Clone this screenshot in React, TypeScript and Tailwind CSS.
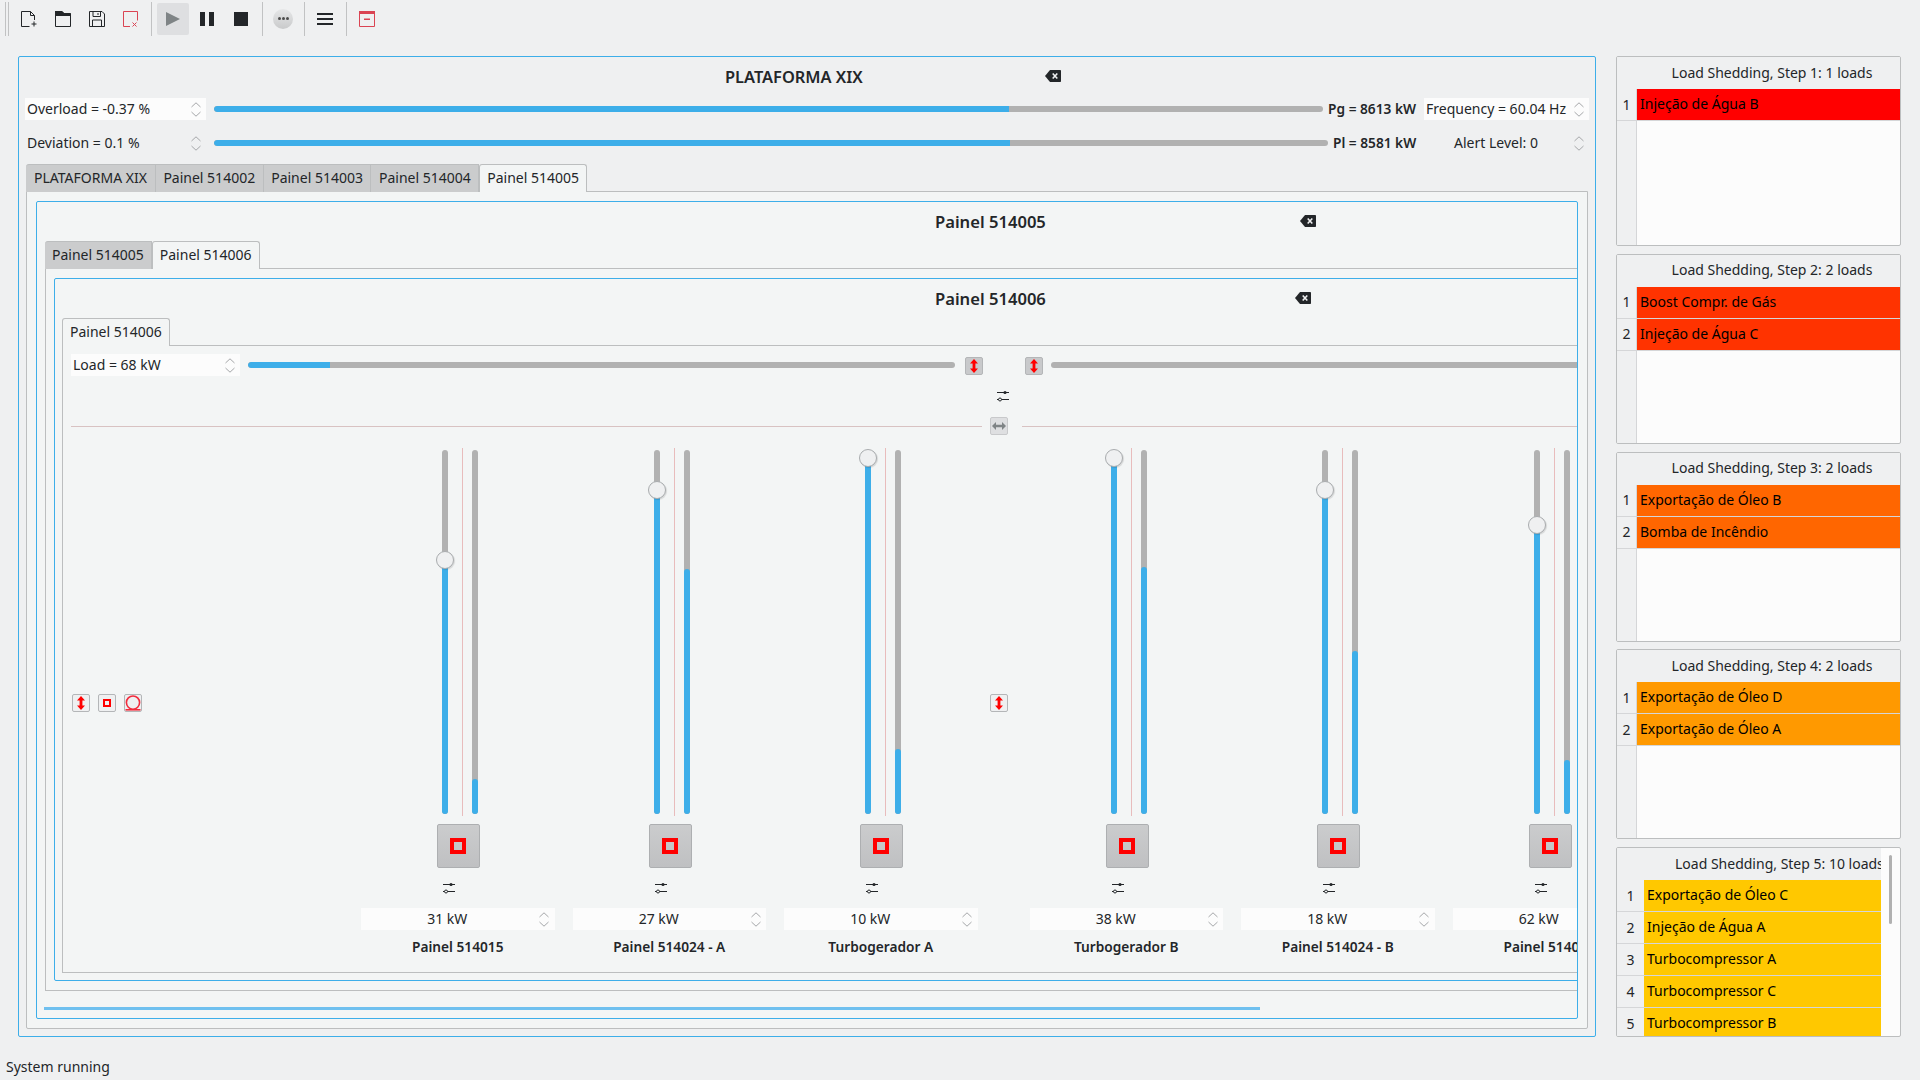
import type { ReactNode } from "react";

function Chevrons() {
  return (
    <svg width="10" height="15" viewBox="0 0 10 15" fill="none" stroke="#a5a7a9" strokeWidth="1">
      <path d="M0.5 5L5 0.8L9.5 5" />
      <path d="M0.5 10L5 14.2L9.5 10" />
    </svg>
  );
}

function Spin({ text, className, white = true, center = false }: { text: string; className: string; white?: boolean; center?: boolean }) {
  return (
    <div className={`flex h-[22px] shrink-0 items-center ${white ? "bg-[#fcfcfc]" : ""} ${className}`}>
      <div className={`min-w-0 flex-1 whitespace-nowrap pb-px ${center ? "text-center" : "pl-[2px]"}`}>{text}</div>
      <div className="flex w-[21px] shrink-0 justify-center">
        <Chevrons />
      </div>
    </div>
  );
}

function HSlider({ className, fill }: { className: string; fill: number }) {
  return (
    <div className={`h-[6px] shrink-0 overflow-hidden rounded-full bg-[#b1b1b1] ${className}`}>
      <div className="h-full rounded-l-full bg-[#3daee9]" style={{ width: `${fill}px` }} />
    </div>
  );
}

function VSlider({ handle, fillFrom }: { handle?: number; fillFrom: number }) {
  return (
    <div className="relative mt-[2px] h-[364px] w-[6px] shrink-0">
      <div className="h-full w-full overflow-hidden rounded-full bg-[#b1b1b1]">
        <div className="w-full rounded-t-[3px] bg-[#3daee9]" style={{ marginTop: `${fillFrom}px`, height: `${364 - fillFrom}px` }} />
      </div>
      {handle !== undefined && (
        <div
          className="absolute left-[-6px] h-[18px] w-[18px] rounded-full border border-[#a9acae] bg-[#eff0f1] shadow-[1px_1px_1px_rgba(0,0,0,0.12)]"
          style={{ top: `${handle - 9}px` }}
        />
      )}
    </div>
  );
}

function Backspace({ className = "" }: { className?: string }) {
  return (
    <svg className={`shrink-0 ${className}`} width="16" height="12" viewBox="0 0 16 12">
      <path d="M5 0H15.2Q16 0 16 .8V11.2Q16 12 15.2 12H5L0 6Z" fill="#232629" />
      <path d="M7.7 3.5L12.3 8.5M12.3 3.5L7.7 8.5" stroke="#eff0f1" strokeWidth="1.6" />
    </svg>
  );
}

function SlidersIcon({ className = "" }: { className?: string }) {
  return (
    <svg className={`block ${className}`} width="12" height="12" viewBox="0 0 12 12" fill="none">
      <path d="M0 2.5H12M0 9.5H1.5M4.5 9.5H12" stroke="#232629" strokeWidth="1" />
      <circle cx="8" cy="2.5" r="1.6" fill="#232629" />
      <circle cx="3" cy="9.5" r="1.5" stroke="#232629" strokeWidth="1" fill="none" />
    </svg>
  );
}

function RedArrows() {
  return (
    <svg width="8" height="14" viewBox="0 0 8 14" fill="#ff0000">
      <path d="M4 0L8 4.5H5.4V9.5H8L4 14L0 9.5H2.6V4.5H0Z" />
    </svg>
  );
}

function SmallButton({ children, className = "" }: { children: ReactNode; className?: string }) {
  return (
    <div className={`flex h-[18px] w-[18px] shrink-0 items-center justify-center rounded-[2px] border border-[#b4b6b8] ${className}`}>
      {children}
    </div>
  );
}

function Tab({ label, active = false, first = false, wide = false }: { label: string; active?: boolean; first?: boolean; wide?: boolean }) {
  const pad = wide ? "px-[8px]" : first || active ? "px-[7px]" : "px-[7.5px]";
  return (
    <div
      className={`flex h-[28px] items-center whitespace-nowrap border border-[#bcbebf] pb-px ${pad} ${
        active ? "z-10 -mb-px rounded-t-[3px] border-b-0 bg-[#f3f5f5]" : "h-[27px] border-b-0 border-l-0 bg-[#cbcccd]"
      } ${first ? "rounded-tl-[3px] border-l" : ""}`}
    >
      {label}
    </div>
  );
}

type Column = { name: string; kw: string; handle: number; fillFrom: number };

const leftColumns: Column[] = [
  { name: "Painel 514015", kw: "31 kW", handle: 110, fillFrom: 329 },
  { name: "Painel 514024 - A", kw: "27 kW", handle: 40, fillFrom: 119 },
  { name: "Turbogerador A", kw: "10 kW", handle: 8, fillFrom: 299 },
];

const rightColumns: Column[] = [
  { name: "Turbogerador B", kw: "38 kW", handle: 8, fillFrom: 117 },
  { name: "Painel 514024 - B", kw: "18 kW", handle: 40, fillFrom: 201 },
  { name: "Painel 514025", kw: "62 kW", handle: 75, fillFrom: 310 },
];

function PanelColumn({ col }: { col: Column }) {
  return (
    <div className="flex h-[510px] w-[193.5px] shrink-0 flex-col">
      <div className="flex h-[368px] pl-[81px]">
        <VSlider handle={col.handle} fillFrom={col.handle} />
        <div className="ml-[14px] h-full w-px bg-[#e8bcbc]" />
        <div className="ml-[9px]">
          <VSlider fillFrom={col.fillFrom} />
        </div>
      </div>
      <div className="ml-[76px] mt-[8px] flex h-[44px] w-[43px] items-center justify-center rounded-[2px] border border-[#adafb1] bg-gradient-to-b from-[#cbcccd] to-[#bfc0c2] pr-px">
        <div className="h-[16px] w-[16px] border-[4px] border-[#ff0000]" />
      </div>
      <SlidersIcon className="ml-[82px] mt-[14px]" />
      <Spin text={col.kw} className="mt-[14px] w-full" center />
      <div className="mt-[6px] flex h-[22px] items-center justify-center whitespace-nowrap pb-px text-[13.7px] font-semibold">{col.name}</div>
    </div>
  );
}

type Shed = { title: string; color: string; loads: string[] };

const sheds: Shed[] = [
  { title: "Load Shedding, Step 1: 1 loads", color: "#ff0000", loads: ["Injeção de Água B"] },
  { title: "Load Shedding, Step 2: 2 loads", color: "#ff3300", loads: ["Boost Compr. de Gás", "Injeção de Água C"] },
  { title: "Load Shedding, Step 3: 2 loads", color: "#ff6600", loads: ["Exportação de Óleo B", "Bomba de Incêndio"] },
  { title: "Load Shedding, Step 4: 2 loads", color: "#ff9900", loads: ["Exportação de Óleo D", "Exportação de Óleo A"] },
];

const step5 = ["Exportação de Óleo C", "Injeção de Água A", "Turbocompressor A", "Turbocompressor C", "Turbocompressor B"];

function ShedPanel({ shed }: { shed: Shed }) {
  return (
    <div className="h-[190px] overflow-hidden rounded-[2px] border border-[#bcbebf] bg-[#fcfcfc]">
      <div className="flex h-[32px] items-center justify-center bg-[#eff0f1] pb-[1px] pl-[27px] whitespace-nowrap">{shed.title}</div>
      <div className="flex h-[156px]">
        <div className="w-[20px] shrink-0 border-r border-[#d5d6d8] bg-[#eff0f1]">
          {shed.loads.map((_, i) => (
            <div key={i} className="flex h-[32px] items-center justify-center border-b border-[#d5d6d8]">
              {i + 1}
            </div>
          ))}
        </div>
        <div className="flex-1">
          {shed.loads.map((load) => (
            <div
              key={load}
              className="flex h-[32px] items-center border-b border-[#d5d6d8] pb-[1px] pl-[3px] text-black"
              style={{ backgroundColor: shed.color }}
            >
              {load}
            </div>
          ))}
        </div>
      </div>
    </div>
  );
}

function Step5Panel() {
  return (
    <div className="flex h-[190px] overflow-hidden rounded-[2px] border border-[#bcbebf] bg-[#fcfcfc]">
      <div className="w-[264px] shrink-0 bg-[#eff0f1]">
        <div className="flex h-[32px] items-center overflow-hidden whitespace-nowrap pb-[1px] pl-[58px]">Load Shedding, Step 5: 10 loads</div>
        {step5.map((load, i) => (
          <div key={load} className="flex h-[32px] border-b border-[#d5d6d8]">
            <div className="flex w-[27px] shrink-0 items-center justify-center">{i + 1}</div>
            <div className="flex flex-1 items-center bg-[#ffc800] pb-[1px] pl-[3px] text-black">{load}</div>
          </div>
        ))}
      </div>
      <div className="flex-1 pl-[8px] pt-[7px]">
        <div className="h-[69px] w-[3px] rounded-full bg-[#b1b1b1]" />
      </div>
    </div>
  );
}

function Toolbar() {
  const sep = "h-[34px] w-px shrink-0 bg-[#c1c2c3]";
  return (
    <div className="flex h-[37px] items-center pl-[5px]">
      <div className={sep} />
      <div className={`${sep} ml-[2px]`} />
      <svg className="ml-[12px]" width="16" height="16" viewBox="0 0 16 16" fill="none" stroke="#232629" strokeWidth="1">
        <path d="M8.5 15.5H.5V.5H9.5L13.5 4.5V9" />
        <path d="M9.5 .5V4.5H13.5" />
        <path d="M13 10.5V15.5M10.5 13H15.5" />
      </svg>
      <svg className="ml-[18px]" width="16" height="16" viewBox="0 0 16 16" fill="none">
        <path d="M.5 15.5V.5H7L9 2.5H15.5V15.5Z" stroke="#232629" />
        <path d="M0 0H7L9.5 2.5H16V5H0Z" fill="#232629" />
      </svg>
      <svg className="ml-[18px]" width="16" height="16" viewBox="0 0 16 16" fill="none" stroke="#232629">
        <path d="M.5 .5H13L15.5 3V15.5H.5Z" />
        <path d="M4 .5V5.5H11.5V.5M9 2V4M3.5 15.5V9H12.5V15.5" />
      </svg>
      <svg className="ml-[18px]" width="16" height="16" viewBox="0 0 16 16" fill="none" stroke="#da4453">
        <path d="M7 15.5H.5V.5H14.5V9.5" />
        <path d="M9.5 11.5L13.5 15.5M13.5 11.5L9.5 15.5" />
      </svg>
      <div className={`${sep} ml-[12px]`} />
      <div className="ml-[5px] flex h-[32px] w-[32px] items-center justify-center rounded-[2px] bg-[#dedfe1]">
        <svg width="14" height="14" viewBox="0 0 14 14">
          <path d="M0 0L14 7L0 14Z" fill="#7f8486" />
        </svg>
      </div>
      <svg className="ml-[11px]" width="14" height="14" viewBox="0 0 14 14" fill="#232629">
        <path d="M0 0H5V14H0ZM9 0H14V14H9Z" />
      </svg>
      <svg className="ml-[20px]" width="14" height="14" viewBox="0 0 14 14" fill="#232629">
        <path d="M0 0H14V14H0Z" />
      </svg>
      <div className={`${sep} ml-[14px]`} />
      <div className="ml-[10px] flex h-[20px] w-[20px] items-center justify-center gap-[1px] rounded-full bg-gradient-to-b from-[#e6e7e8] to-[#c9cacb]">
        <div className="h-[3px] w-[3px] rounded-full bg-[#4d4d4d]" />
        <div className="h-[3px] w-[3px] rounded-full bg-[#4d4d4d]" />
        <div className="h-[3px] w-[3px] rounded-full bg-[#4d4d4d]" />
      </div>
      <div className={`${sep} ml-[11px]`} />
      <div className="ml-[12px] flex w-[16px] flex-col gap-[3px]">
        <div className="h-[2px] bg-[#232629]" />
        <div className="h-[2px] bg-[#232629]" />
        <div className="h-[2px] bg-[#232629]" />
      </div>
      <div className={`${sep} ml-[13px]`} />
      <svg className="ml-[12px]" width="16" height="16" viewBox="0 0 16 16" fill="none">
        <path d="M.5 .5H15.5V15.5H.5Z" stroke="#da4453" />
        <path d="M0 0H16V3H0ZM5 7.5H11V9H5Z" fill="#da4453" />
      </svg>
    </div>
  );
}

export default function App() {
  return (
    <div className="h-[1080px] w-[1920px] overflow-hidden bg-[#eff0f1] font-['Noto_Sans',sans-serif] text-[14px] leading-[18px] text-[#232629]">
      <Toolbar />
      <div className="ml-[18px] mt-[19px] flex gap-[20px]">
        {/* plataforma */}
        <div className="h-[981px] w-[1578px] rounded-[2px] border border-[#3daee9]">
          <div className="flex h-[41px] items-center pb-[3px]">
            <div className="ml-[706px] mt-[2px] w-[138px] whitespace-nowrap text-[16.4px] font-semibold">PLATAFORMA XIX</div>
            <Backspace className="ml-[182px]" />
          </div>
          <div className="flex items-center pl-[6px]">
            <Spin text="Overload = -0.37 %" className="w-[181px]" />
            <HSlider className="ml-[8px] w-[1109px]" fill={795} />
            <div className="ml-[5px] w-[88px] whitespace-nowrap pb-px text-right text-[13.7px] font-semibold">Pg = 8613 kW</div>
            <Spin text="Frequency = 60.04 Hz" className="ml-[8px] w-[165px]" />
          </div>
          <div className="mt-[12px] flex items-center pl-[6px]">
            <Spin text="Deviation = 0.1 %" className="w-[181px]" white={false} />
            <HSlider className="ml-[8px] w-[1114px]" fill={796} />
            <div className="ml-[5px] w-[83px] whitespace-nowrap pb-px text-right text-[13.7px] font-semibold">Pl = 8581 kW</div>
            <Spin text="Alert Level: 0" className="ml-[8px] w-[165px]" white={false} center />
          </div>
          <div className="ml-[7px] mt-[10px] flex h-[27px] items-start">
            <Tab label="PLATAFORMA XIX" first wide />
            <Tab label="Painel 514002" />
            <Tab label="Painel 514003" />
            <Tab label="Painel 514004" />
            <Tab label="Painel 514005" active />
          </div>

          <div className="ml-[7px] h-[838px] w-[1562px] rounded-b-[2px] border border-[#bcbebf] bg-[#f3f5f5] pl-[9px] pt-[9px]">
            <div className="h-[818px] w-[1542px] overflow-hidden rounded-[2px] border border-[#3daee9]">
              <div className="flex h-[39px] items-center pb-px">
                <div className="ml-[898px] mt-[2px] w-[111px] whitespace-nowrap text-[16.6px] font-semibold">Painel 514005</div>
                <Backspace className="ml-[254px]" />
              </div>
              <div className="ml-[8px] flex h-[27px] items-start">
                <Tab label="Painel 514005" first />
                <Tab label="Painel 514006" active />
              </div>
              <div className="ml-[8px] h-[723px] w-[1600px] border border-[#bcbebf] pl-[8px] pt-[9px]">
                <div className="h-[703px] w-[1580px] rounded-[2px] border border-[#3daee9]">
                  <div className="flex h-[39px] items-center pb-px">
                    <div className="ml-[880px] mt-[2px] w-[111px] whitespace-nowrap text-[16.6px] font-semibold">Painel 514006</div>
                    <Backspace className="ml-[249px]" />
                  </div>
                  <div className="ml-[7px] flex h-[27px] items-start">
                    <Tab label="Painel 514006" active />
                  </div>
                  <div className="ml-[7px] h-[628px] w-[1560px] border border-[#bcbebf] pl-[8px] pt-[8px]">
                    <div className="flex items-center">
                      <Spin text="Load = 68 kW" className="w-[169px]" />
                      <HSlider className="ml-[8px] w-[707px]" fill={82} />
                      <SmallButton className="ml-[10px] mt-[2px] bg-[#c8c9cb]">
                        <RedArrows />
                      </SmallButton>
                      <SmallButton className="ml-[42px] mt-[2px] bg-[#c8c9cb]">
                        <RedArrows />
                      </SmallButton>
                      <HSlider className="ml-[8px] w-[600px]" fill={0} />
                    </div>
                    <SlidersIcon className="ml-[926px] mt-[14px]" />
                    <div className="mt-[15px] flex items-center">
                      <div className="h-px w-[912px] bg-[#d8c2c2]" />
                      <SmallButton className="ml-[8px] border-[#c8c9cb] bg-[#dedfe1]">
                        <svg width="14" height="8" viewBox="0 0 14 8" fill="#7f8486">
                          <path d="M0 4L4 0V2.8H10V0L14 4L10 8V5.2H4V8Z" />
                        </svg>
                      </SmallButton>
                      <div className="ml-[14px] h-px w-[600px] bg-[#d8c2c2]" />
                    </div>

                    <div className="mt-[13px] flex">
                      <div className="flex h-[510px] w-[290px] shrink-0 items-center gap-[8px] pl-px">
                        <SmallButton className="bg-[#eff0f1]">
                          <RedArrows />
                        </SmallButton>
                        <SmallButton className="bg-[#eff0f1]">
                          <div className="h-[8px] w-[8px] border-[2px] border-[#ff0000]" />
                        </SmallButton>
                        <SmallButton className="bg-[#eff0f1]">
                          <svg width="16" height="16" viewBox="0 0 16 16" fill="none" stroke="#f22c3d" strokeWidth="1.6">
                            <circle cx="8" cy="7.6" r="6.6" />
                            <path d="M.5 14.8H15.5" />
                          </svg>
                        </SmallButton>
                      </div>
                      <div className="flex shrink-0 gap-[18px]">
                        {leftColumns.map((col) => (
                          <PanelColumn key={col.name} col={col} />
                        ))}
                      </div>
                      <div className="flex h-[510px] w-[52px] shrink-0 items-center pl-[12px]">
                        <SmallButton className="bg-[#eff0f1]">
                          <RedArrows />
                        </SmallButton>
                      </div>
                      <div className="flex shrink-0 gap-[18px]">
                        {rightColumns.map((col) => (
                          <PanelColumn key={col.name} col={col} />
                        ))}
                      </div>
                    </div>
                  </div>
                </div>
              </div>
              <div className="ml-[7px] mt-[16px] h-[3px] w-[1216px] bg-[#6fc0ef]" />
            </div>
          </div>
        </div>

        {/* load shedding */}
        <div className="flex w-[285px] shrink-0 flex-col gap-[7.75px]">
          {sheds.map((shed) => (
            <ShedPanel key={shed.title} shed={shed} />
          ))}
          <Step5Panel />
        </div>
      </div>
      <div className="mt-[21px] pl-[6px]">System running</div>
    </div>
  );
}
